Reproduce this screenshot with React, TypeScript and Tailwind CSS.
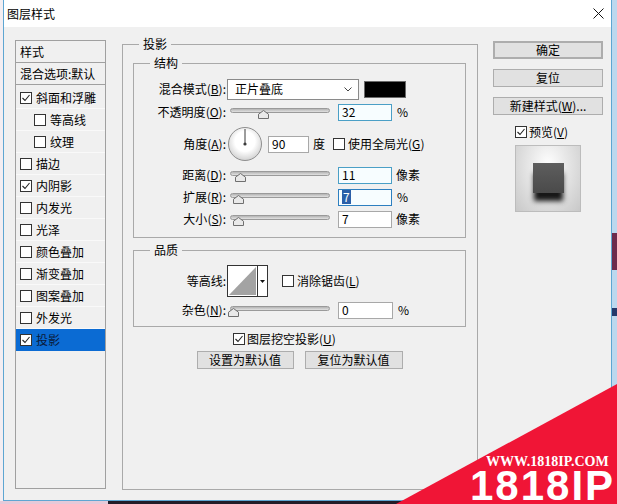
import type { ReactNode } from 'react'

type Layer = { name: string; checked: boolean; sub?: boolean; active?: boolean }

const LAYERS: Layer[] = [
  { name: '斜面和浮雕', checked: true },
  { name: '等高线', checked: false, sub: true },
  { name: '纹理', checked: false, sub: true },
  { name: '描边', checked: false },
  { name: '内阴影', checked: true },
  { name: '内发光', checked: false },
  { name: '光泽', checked: false },
  { name: '颜色叠加', checked: false },
  { name: '渐变叠加', checked: false },
  { name: '图案叠加', checked: false },
  { name: '外发光', checked: false },
  { name: '投影', checked: true, active: true },
]

function Check({ checked, className = '' }: { checked: boolean; className?: string }) {
  return (
    <span className={`flex h-[12px] w-[12px] shrink-0 items-center justify-center border border-[#333] bg-white ${className}`}>
      {checked && (
        <svg width="10" height="10" viewBox="0 0 10 10">
          <path d="M1.5 5 L4 7.5 L8.5 2" fill="none" stroke="#222" strokeWidth="1.1" />
        </svg>
      )}
    </span>
  )
}

function Mn({ text, k, colon = true }: { text: string; k: string; colon?: boolean }) {
  return (
    <>
      {text}(<span className="underline underline-offset-1">{k}</span>){colon ? ':' : ''}
    </>
  )
}

function Slider({ thumb }: { thumb: string }) {
  return (
    <div className="relative ml-[4px] h-[20px] w-[100px] shrink-0">
      <div className="absolute left-0 right-0 top-[6px] h-[5px] rounded-full border border-[#9a9a9a] bg-linear-to-b from-[#b4b4b4] to-[#e2e2e2]" />
      <svg className={`absolute top-[8px] ${thumb}`} width="11" height="9" viewBox="0 0 11 9">
        <path d="M5.5 0.5 L10.5 4.2 L10.5 8.5 L0.5 8.5 L0.5 4.2 Z" fill="#e9e9e9" stroke="#6f6f6f" />
      </svg>
    </div>
  )
}

function Field({ value, tone = 'plain', className = '' }: { value: string; tone?: 'plain' | 'focus' | 'select'; className?: string }) {
  const border =
    tone === 'focus'
      ? 'border-[#4a9fc6] bg-[#f7fdff]'
      : tone === 'select'
        ? 'border-[#2d7fc0] bg-[#f7fdff]'
        : 'border-[#a8a8a8] bg-white'
  return (
    <div className={`flex h-[17px] shrink-0 items-center border pl-[3px] ${border} ${className}`}>
      {tone === 'select' ? (
        <span className="bg-[#2b5fa8] px-px text-white">{value}</span>
      ) : (
        <span>{value}</span>
      )}
    </div>
  )
}

function Row({ label, children, h = 'h-[20px]', mt = '' }: { label: ReactNode; children: ReactNode; h?: string; mt?: string }) {
  return (
    <div className={`flex items-center ${h} ${mt}`}>
      <div className="w-[92px] shrink-0 text-right">{label}</div>
      {children}
    </div>
  )
}

function Button({ children, className = '' }: { children: ReactNode; className?: string }) {
  return (
    <div className={`flex h-[18px] items-center justify-center border border-[#adadad] bg-[#e1e1e1] ${className}`}>
      {children}
    </div>
  )
}

function Group({ title, children, className = '' }: { title: string; children: ReactNode; className?: string }) {
  return (
    <fieldset className={`border border-[#a9a9a9] p-0 ${className}`}>
      <legend className="ml-[16px] px-[4px] leading-[16px]">{title}</legend>
      {children}
    </fieldset>
  )
}

function Dial() {
  return (
    <svg className="ml-[2px] shrink-0" width="34" height="34" viewBox="0 0 34 34">
      <defs>
        <radialGradient id="dial" cx="50%" cy="42%" r="55%">
          <stop offset="55%" stopColor="#ffffff" />
          <stop offset="100%" stopColor="#d6d6d6" />
        </radialGradient>
      </defs>
      <circle cx="17" cy="17" r="16.5" fill="url(#dial)" stroke="#8e8e8e" />
      <line x1="17" y1="2" x2="17" y2="17" stroke="#3a3a3a" strokeWidth="1" />
      <circle cx="17" cy="17" r="1.6" fill="#3a3a3a" />
    </svg>
  )
}

export default function App() {
  return (
    <div className="relative h-[504px] w-[617px] overflow-hidden bg-[#231c28] font-['Noto_Sans_CJK_SC','Microsoft_YaHei',sans-serif] text-[12px] leading-[14px] text-black">
      <div className="flex h-[501px]">
        <div className="w-[3px] bg-[#f3eef2]" />
        <div className="flex w-[609px] flex-col border-x border-b border-[#5ea6d2] bg-[#f0f0f0]">
          {/* title bar */}
          <div className="flex h-[27px] items-center justify-between bg-white pl-[3px] pr-[7px]">
            <span>图层样式</span>
            <svg width="11" height="11" viewBox="0 0 11 11">
              <path d="M0.5 0.5 L10.5 10.5 M10.5 0.5 L0.5 10.5" stroke="#111" strokeWidth="1" />
            </svg>
          </div>

          <div className="flex flex-1 items-start pl-[11px]">
            {/* styles list */}
            <div className="mt-[13px] flex h-[449px] w-[91px] flex-col border border-[#a0a0a0]">
              <div className="flex h-[22px] items-center border-b border-[#a0a0a0] pl-[4px]">样式</div>
              <div className="flex h-[22px] items-center border-b border-[#a0a0a0] pl-[4px]">混合选项:默认</div>
              <div className="mt-[2px] flex flex-col">
                {LAYERS.map((l) => (
                  <div
                    key={l.name}
                    className={`flex h-[22px] items-center border-b ${l.active ? 'border-[#0b6bd3] bg-[#0b6bd3]' : 'border-[#f9f9f9]'}`}
                  >
                    <Check checked={l.checked} className={l.sub ? 'ml-[18px]' : 'ml-[4px]'} />
                    <span className={`ml-[4px] ${l.active ? 'text-[#0a1a3a]' : ''}`}>{l.name}</span>
                  </div>
                ))}
              </div>
            </div>

            {/* drop shadow settings */}
            <Group title="投影" className="ml-[16px] mt-[9px] h-[454px] w-[356px]">
              <div className="flex flex-col pl-[10px]">
                <Group title="结构" className="mt-[3px] w-[333px]">
                  <div className="flex flex-col pb-[8px] pt-[7px]">
                    <Row label={<Mn text="混合模式" k="B" />} h="h-[22px]">
                      <div className="ml-[1px] flex h-[21px] w-[132px] shrink-0 items-center justify-between border border-[#8a8a8a] bg-white pl-[7px] pr-[6px]">
                        <span>正片叠底</span>
                        <svg width="8" height="5" viewBox="0 0 8 5">
                          <path d="M0.5 0.5 L4 4 L7.5 0.5" fill="none" stroke="#444" />
                        </svg>
                      </div>
                      <div className="ml-[5px] h-[17px] w-[42px] shrink-0 border border-[#6a6a6a] bg-black" />
                    </Row>
                    <Row label={<Mn text="不透明度" k="O" />} mt="mt-[2px]">
                      <Slider thumb="left-[28px]" />
                      <Field value="32" tone="focus" className="ml-[8px] w-[54px]" />
                      <span className="ml-[5px]">%</span>
                    </Row>
                    <Row label={<Mn text="角度" k="A" />} h="h-[36px]" mt="mt-[4px]">
                      <Dial />
                      <Field value="90" className="ml-[6px] w-[41px] border-[#7a7a7a]" />
                      <span className="ml-[4px]">度</span>
                      <Check checked={false} className="ml-[8px]" />
                      <span className="ml-[3px]">
                        <Mn text="使用全局光" k="G" colon={false} />
                      </span>
                    </Row>
                    <Row label={<Mn text="距离" k="D" />} mt="mt-[3px]">
                      <Slider thumb="left-[5px]" />
                      <Field value="11" tone="focus" className="ml-[8px] w-[54px]" />
                      <span className="ml-[4px]">像素</span>
                    </Row>
                    <Row label={<Mn text="扩展" k="R" />} mt="mt-[2px]">
                      <Slider thumb="left-[3px]" />
                      <Field value="7" tone="select" className="ml-[8px] w-[54px]" />
                      <span className="ml-[5px]">%</span>
                    </Row>
                    <Row label={<Mn text="大小" k="S" />} mt="mt-[2px]">
                      <Slider thumb="left-[3px]" />
                      <Field value="7" className="ml-[8px] w-[54px]" />
                      <span className="ml-[4px]">像素</span>
                    </Row>
                  </div>
                </Group>

                <Group title="品质" className="mt-[4px] w-[333px]">
                  <div className="flex flex-col pb-[6px] pt-[7px]">
                    <Row label="等高线:" h="h-[32px]">
                      <div className="ml-[1px] flex h-[32px] w-[41px] shrink-0 border border-[#333] bg-white">
                        <svg width="29" height="30" viewBox="0 0 29 30">
                          <polygon points="1,29 28,1 28,29" fill="#a3a3a3" />
                        </svg>
                        <div className="flex flex-1 items-center justify-center border-l border-[#333]">
                          <svg width="5" height="3" viewBox="0 0 5 3">
                            <polygon points="0,0 5,0 2.5,3" fill="#111" />
                          </svg>
                        </div>
                      </div>
                      <Check checked={false} className="ml-[14px]" />
                      <span className="ml-[3px]">
                        <Mn text="消除锯齿" k="L" colon={false} />
                      </span>
                    </Row>
                    <Row label={<Mn text="杂色" k="N" />} mt="mt-[3px]">
                      <Slider thumb="-left-[2px]" />
                      <Field value="0" className="ml-[8px] w-[55px]" />
                      <span className="ml-[5px]">%</span>
                    </Row>
                  </div>
                </Group>

                <div className="ml-[100px] mt-[5px] flex h-[14px] items-center">
                  <Check checked />
                  <span className="ml-[2px]">
                    <Mn text="图层挖空投影" k="U" colon={false} />
                  </span>
                </div>
                <div className="mt-[5px] flex w-[333px] justify-center gap-[11px]">
                  <Button className="w-[97px]">设置为默认值</Button>
                  <Button className="w-[98px]">复位为默认值</Button>
                </div>
              </div>
            </Group>

            {/* action buttons */}
            <div className="ml-[15px] mt-[14px] flex w-[110px] flex-col">
              <Button className="border-2 border-[#2a86bd]">确定</Button>
              <Button className="mt-[10px]">复位</Button>
              <Button className="mt-[10px]">
                新建样式(<span className="underline underline-offset-1">W</span>)...
              </Button>
              <div className="ml-[22px] mt-[10px] flex h-[14px] items-center">
                <Check checked />
                <span className="ml-[2px]">
                  <Mn text="预览" k="V" colon={false} />
                </span>
              </div>
              <div className="ml-[22px] mt-[6px] flex h-[67px] w-[66px] justify-center border border-[#bcbcbc] bg-[radial-gradient(ellipse_at_50%_30%,#ffffff_0%,#e8e8e8_40%,#c8c8c8_100%)] pt-[17px]">
                <div className="h-[30px] w-[31px] bg-linear-to-b from-[#5e5e5e] to-[#4a4a4a] shadow-[0_9px_5px_-1px_rgba(0,0,0,0.9)]" />
              </div>
            </div>
          </div>
        </div>
        <div className="flex flex-1 flex-col">
          <div className="h-[233px] bg-[#bcd8ee]" />
          <div className="h-[37px] bg-[#6d2a4c]" />
          <div className="h-[38px] bg-[#bcd8ee]" />
          <div className="h-[8px] bg-[#24386a]" />
          <div className="flex-1 bg-[#bcd8ee]" />
        </div>
      </div>
      <div className="flex h-[3px]">
        <div className="w-[108px] bg-[#e6c9d8]" />
        <div className="flex-1 bg-[#231c28]" />
      </div>

      {/* watermark */}
      <div className="pointer-events-none absolute inset-0 bg-[#f01536] [clip-path:polygon(617px_384px,617px_504px,396px_504px)]" />
      <div className="pointer-events-none absolute left-[486px] top-[454px] h-[16px] overflow-hidden font-['Liberation_Serif',serif] text-[14px] font-bold leading-[16px] text-white">
        WWW.1818IP.COM
      </div>
      <div className="pointer-events-none absolute left-[470px] top-[470px] h-[31px] overflow-hidden whitespace-nowrap font-['Liberation_Sans',Arial,sans-serif] text-[42px] font-bold leading-[31px] tracking-[2px] text-white">
        1818IP
      </div>
    </div>
  )
}
